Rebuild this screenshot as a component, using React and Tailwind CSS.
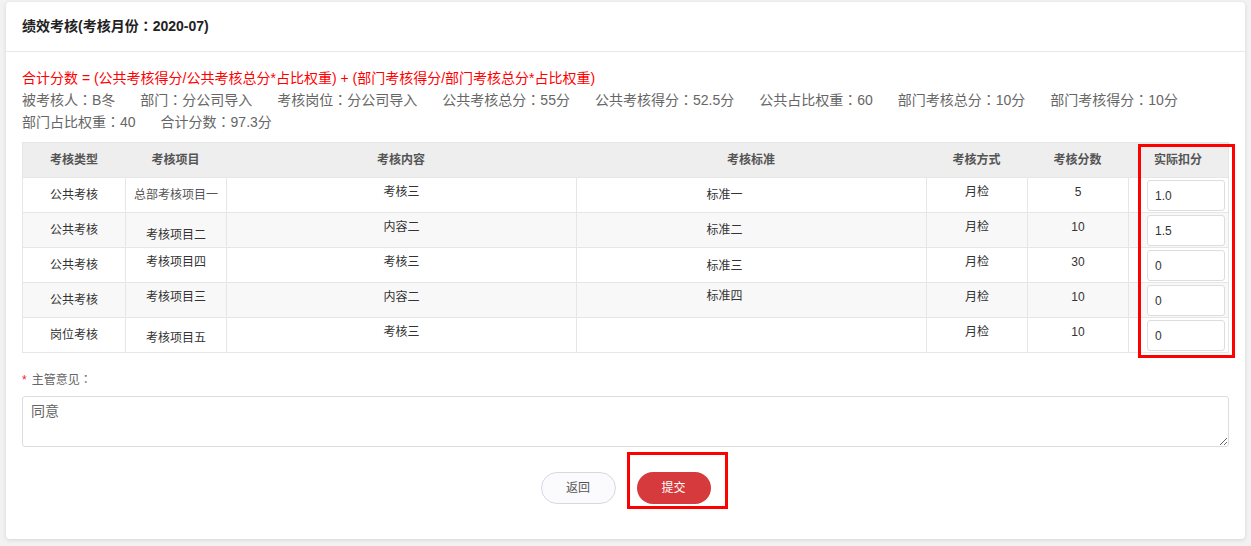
const FONT = { fontFamily: '"Liberation Sans", "Noto Sans CJK SC", sans-serif' };
// the reference renders full-width colons centred in their cell
const FONT_TC = { fontFamily: '"Liberation Sans", "Noto Sans CJK TC", "Noto Sans CJK SC", sans-serif' };

const COLS = "grid-cols-[102px_101px_350px_350px_101px_101px_100px]";

// text nudges: the original cells are not all vertically centred
const NUDGE = {
  c: "",
  u3: "pb-[6px]",
  u4: "pb-[8px]",
  d1: "pt-[2px]",
  d3: "pt-[6px]",
  d5: "pt-[10px]",
};

const HEADERS = ["考核类型", "考核项目", "考核内容", "考核标准", "考核方式", "考核分数", "实际扣分"];

const ROWS = [
  {
    cells: [["公共考核", "c"], ["总部考核项目一", "c"], ["考核三", "u3"], ["标准一", "c"], ["月检", "u3"], ["5", "u3"]],
    score: "1.0",
  },
  {
    cells: [["公共考核", "c"], ["考核项目二", "d5"], ["内容二", "u3"], ["标准二", "c"], ["月检", "u3"], ["10", "u3"]],
    score: "1.5",
  },
  {
    cells: [["公共考核", "c"], ["考核项目四", "u3"], ["考核三", "u3"], ["标准三", "d1"], ["月检", "u3"], ["30", "u3"]],
    score: "0",
  },
  {
    cells: [["公共考核", "c"], ["考核项目三", "u3"], ["内容二", "u3"], ["标准四", "u4"], ["月检", "u3"], ["10", "u3"]],
    score: "0",
  },
  {
    cells: [["岗位考核", "c"], ["考核项目五", "d3"], ["考核三", "u3"], ["", "c"], ["月检", "u3"], ["10", "u3"]],
    score: "0",
  },
];

const INFO = [
  "被考核人：B冬",
  "部门：分公司导入",
  "考核岗位：分公司导入",
  "公共考核总分：55分",
  "公共考核得分：52.5分",
  "公共占比权重：60",
  "部门考核总分：10分",
  "部门考核得分：10分",
  "部门占比权重：40",
  "合计分数：97.3分",
];

function Colon() {
  return <span style={FONT_TC}>：</span>;
}

function withColon(text) {
  const [a, b] = text.split("：");
  return (
    <>
      {a}
      <Colon />
      {b}
    </>
  );
}

function ScoreTable() {
  return (
    <div className="mt-[9px] border border-[#e6e6e6] text-[12px] text-[#333]">
      <div className={`grid ${COLS} h-[34px] bg-[#eeeeee]`}>
        {HEADERS.map((h) => (
          <div key={h} className="flex items-center justify-center font-bold text-[#555]">
            {h}
          </div>
        ))}
      </div>
      {ROWS.map((row, i) => (
        <div
          key={i}
          className={`grid ${COLS} h-[35px] border-t border-[#e6e6e6] ${i % 2 === 1 ? "bg-[#f8f8f8]" : "bg-white"}`}
        >
          {row.cells.map(([text, nudge], j) => (
            <div
              key={j}
              className={`flex items-center justify-center ${j > 0 ? "border-l border-[#e6e6e6]" : ""} ${
                j === 3 ? "pr-[54px]" : ""
              } ${NUDGE[nudge]} ${j === 1 && i === 0 ? "text-[#555]" : ""}`}
            >
              {text}
            </div>
          ))}
          <div className="flex items-center justify-end border-l border-[#e6e6e6] pr-[3px]">
            <input
              defaultValue={row.score}
              className="h-[31px] w-[78px] rounded-[3px] border border-[#dddddd] bg-white px-[7px] pt-[2px] text-[12px] text-[#333] outline-none"
              style={FONT}
            />
          </div>
        </div>
      ))}
    </div>
  );
}

export default function App() {
  return (
    <div className="relative min-h-[546px] bg-[#f2f2f2] px-[6px] pt-[2px]" style={FONT}>
      <div className="rounded-[4px] bg-white shadow-[0_1px_4px_rgba(0,0,0,0.12)]">
        <div className="flex h-[50px] items-center border-b border-[#e8e8e8] px-[16px]">
          <h1 className="text-[14px] font-bold text-[#222]">{withColon("绩效考核(考核月份：2020-07)")}</h1>
        </div>

        <div className="px-[16px] pb-[35px] pt-[15px]">
          <p className="text-[14px] leading-[22px] text-[#ff0000]">
            合计分数 = (公共考核得分/公共考核总分*占比权重) + (部门考核得分/部门考核总分*占比权重)
          </p>
          <div className="flex flex-wrap gap-x-[25px] text-[14px] leading-[22px] text-[#666]">
            {INFO.map((t) => (
              <span key={t}>{withColon(t)}</span>
            ))}
          </div>

          <ScoreTable />

          <div className="mt-[17px] flex h-[20px] items-center text-[12px] text-[#666]">
            <span className="mr-[5px] text-[#f5222d]">*</span>
            <span>{withColon("主管意见：")}</span>
          </div>
          <textarea
            defaultValue="同意"
            className="mt-[6px] block h-[51px] w-full rounded-[3px] border border-[#dddddd] px-[8px] py-[4px] text-[14px] text-[#666] outline-none"
            style={FONT}
          />

          <div className="mt-[25px] flex justify-center gap-[21px]">
            <button className="h-[32px] w-[75px] rounded-full border border-[#d9d6e4] bg-[#fbfafd] text-[12px] text-[#555]">
              返回
            </button>
            <button className="h-[32px] w-[74px] rounded-full bg-[#d63a3d] text-[12px] text-white">提交</button>
          </div>
        </div>
      </div>

      {/* red annotation boxes drawn over the screenshot */}
      <div className="pointer-events-none absolute left-[1138px] top-[144px] h-[214px] w-[97px] border-[3px] border-[#ff0000]" />
      <div className="pointer-events-none absolute left-[627px] top-[452px] h-[57px] w-[101px] border-[3px] border-[#ff0000]" />
    </div>
  );
}
